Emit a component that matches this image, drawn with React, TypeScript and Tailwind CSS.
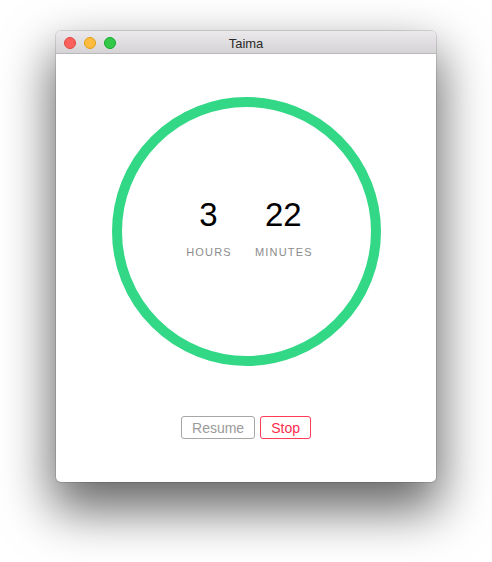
const font = "font-['Helvetica_Neue','Liberation_Sans',Arial,sans-serif]";

function TrafficLights() {
  return (
    <div className="flex items-center gap-[8px] pl-[8px]">
      <span className="h-[12px] w-[12px] rounded-full border border-[#e2463f] bg-[#fc605c]" />
      <span className="h-[12px] w-[12px] rounded-full border border-[#e1a116] bg-[#fdbc40]" />
      <span className="h-[12px] w-[12px] rounded-full border border-[#12ac28] bg-[#34c84a]" />
    </div>
  );
}

function Unit({ value, label }: { value: string; label: string }) {
  return (
    <div className="flex flex-col items-center">
      <span className="text-[33px] leading-[40px] text-black">{value}</span>
      <span className="mt-[10px] pl-[1px] text-[11px] leading-[14px] tracking-[1.2px] text-[#8c8c8c]">
        {label}
      </span>
    </div>
  );
}

export default function App() {
  return (
    <div className={`h-[562px] w-[492px] bg-white pl-[56px] pt-[31px] ${font}`}>
      <div className="w-[380px] overflow-hidden rounded-[5px] bg-white shadow-[0_24px_50px_4px_rgba(0,0,0,0.6),0_0_0_1px_rgba(0,0,0,0.12)]">
        <div className="relative flex h-[23px] items-center border-b border-[#b9b9b9] bg-gradient-to-b from-[#ebe9eb] to-[#d5d3d5] pt-[2px]">
          <TrafficLights />
          <span className="absolute inset-x-0 top-[2px] text-center text-[13px] leading-[22px] text-[#2a2a2a]">
            Taima
          </span>
        </div>
        <div className="flex h-[428px] flex-col items-center pt-[43px]">
          <div className="ml-[1px] flex h-[269px] w-[269px] items-center justify-center rounded-full border-[10px] border-[#33d886]">
            <div className="mb-[10px] flex items-start gap-[22px] pl-[5px]">
              <Unit value="3" label="HOURS" />
              <Unit value="22" label="MINUTES" />
            </div>
          </div>
          <div className="mt-[50px] flex gap-[5px] text-[14px] leading-[21px]">
            <button className="h-[23px] rounded-[3px] border border-[#a6a6a6] px-[10px] pt-[1px] text-[#9a9a9a]">
              Resume
            </button>
            <button className="h-[23px] rounded-[3px] border border-[#ff3b55] px-[10px] pt-[1px] text-[#ff2d4b]">
              Stop
            </button>
          </div>
        </div>
      </div>
    </div>
  );
}
